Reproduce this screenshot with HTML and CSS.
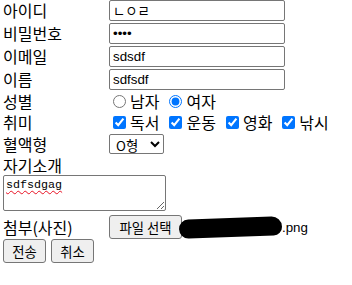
FILE: index.html
```
<html>
	<head>
		<meta charset="utf-8"/>
		<link rel="stylesheet" href="styles.css">
	</head>
	<body>
		<form class="join" name="join">
			<div class="row r-input">
				<span class="label">아이디</span>
				<input class="text" type="text" name="id" value="ㄴㅇㄹ"/>
			</div>
			<div class="row r-input">
				<span class="label">비밀번호</span>
				<input class="text" type="password" name="pw" value="1234"/>
			</div>
			<div class="row r-input">
				<span class="label">이메일</span>
				<input class="text" type="text" name="email" value="sdsdf"/>
			</div>
			<div class="row r-input">
				<span class="label">이름</span>
				<input class="text" type="text" name="name" value="sdfsdf"/>
			</div>
			<div class="row r-choice">
				<span class="label">성별</span>
				<label class="opt"><input type="radio" name="gender" value="m"/>남자</label>
				<label class="opt"><input type="radio" name="gender" value="f" checked/>여자</label>
			</div>
			<div class="row r-choice">
				<span class="label">취미</span>
				<label class="opt"><input type="checkbox" name="hobby" value="read" checked/>독서</label>
				<label class="opt"><input type="checkbox" name="hobby" value="sport" checked/>운동</label>
				<label class="opt"><input type="checkbox" name="hobby" value="movie" checked/>영화</label>
				<label class="opt"><input type="checkbox" name="hobby" value="fish" checked/>낚시</label>
			</div>
			<div class="row r-select">
				<span class="label">혈액형</span>
				<select class="blood" name="blood">
					<option>A형</option>
					<option>B형</option>
					<option selected>O형</option>
					<option>AB형</option>
				</select>
			</div>
			<div class="row r-title">
				<span class="label">자기소개</span>
			</div>
			<textarea class="intro" name="intro">sdfsdgag</textarea>
			<div class="row r-file">
				<span class="label">첨부(사진)</span>
				<button class="btn file-btn" type="button">파일 선택</button>
				<span class="file-name"><span class="blot"></span>.png</span>
			</div>
			<div class="buttons">
				<button class="btn" type="submit">전송</button>
				<button class="btn" type="reset">취소</button>
			</div>
		</form>
	</body>
</html>
```

FILE: styles.css
```
body{
	margin: 0;
	background-color: white;
	color: black;
	font-family: "Noto Sans CJK KR", "Noto Sans", sans-serif;
	font-size: 16px;
}
.join{
	display: flex;
	flex-direction: column;
	padding-left: 3px;
}
.row{
	display: flex;
	align-items: center;
	margin-bottom: 2px;
}
.label{
	width: 106px;
	flex-shrink: 0;
	line-height: 19px;
}
.r-input{
	height: 21px;
}
.r-choice{
	height: 19px;
}
.r-select{
	height: 20px;
}
.r-title{
	height: 19px;
	margin-bottom: 0;
}
.r-file{
	height: 24px;
	margin-top: 4px;
	margin-bottom: 0;
}
.text{
	box-sizing: border-box;
	width: 176px;
	height: 21px;
	margin: 0;
	padding: 1px 3px;
	border: 1px solid #767676;
	border-radius: 2px;
	font-family: "Liberation Sans", "Noto Sans CJK KR", sans-serif;
	font-size: 13.33px;
	color: black;
}
.opt{
	display: flex;
	align-items: center;
	margin-right: 6px;
	line-height: 19px;
}
.opt input{
	width: 13px;
	height: 13px;
	margin: 0 4px 0 4px;
}
.blood{
	box-sizing: border-box;
	width: 55px;
	height: 20px;
	margin: 0;
	padding: 0 0 0 2px;
	border: 1px solid #767676;
	border-radius: 2px;
	background-color: white;
	font-family: "Noto Sans CJK KR", sans-serif;
	font-size: 13.33px;
	color: black;
}
.intro{
	box-sizing: border-box;
	width: 163px;
	height: 36px;
	margin: 0;
	padding: 2px 2px;
	border: 1px solid #767676;
	border-radius: 2px;
	font-family: "Liberation Mono", monospace;
	font-size: 11.7px;
	line-height: 14px;
	text-decoration: underline wavy #e81123;
	text-decoration-thickness: 1px;
	text-underline-offset: 2px;
}
.btn{
	box-sizing: border-box;
	height: 24px;
	margin: 0;
	padding: 0 6px;
	border: 1px solid #767676;
	border-radius: 3px;
	background-color: #efefef;
	font-family: "Noto Sans CJK KR", sans-serif;
	font-size: 13.33px;
	color: black;
}
.file-btn{
	width: 73px;
	padding: 0;
}
.file-name{
	display: flex;
	align-items: center;
	font-family: "Liberation Sans", sans-serif;
	font-size: 13.33px;
}
.blot{
	display: inline-block;
	width: 103px;
	height: 19px;
	margin-left: -3px;
	margin-top: 1px;
	background-color: black;
	border-radius: 10px 11px 9px 10px;
	transform: rotate(-2deg);
}
.buttons{
	display: flex;
	gap: 5px;
}
.buttons .btn{
	width: 43px;
	padding: 0;
}
```
